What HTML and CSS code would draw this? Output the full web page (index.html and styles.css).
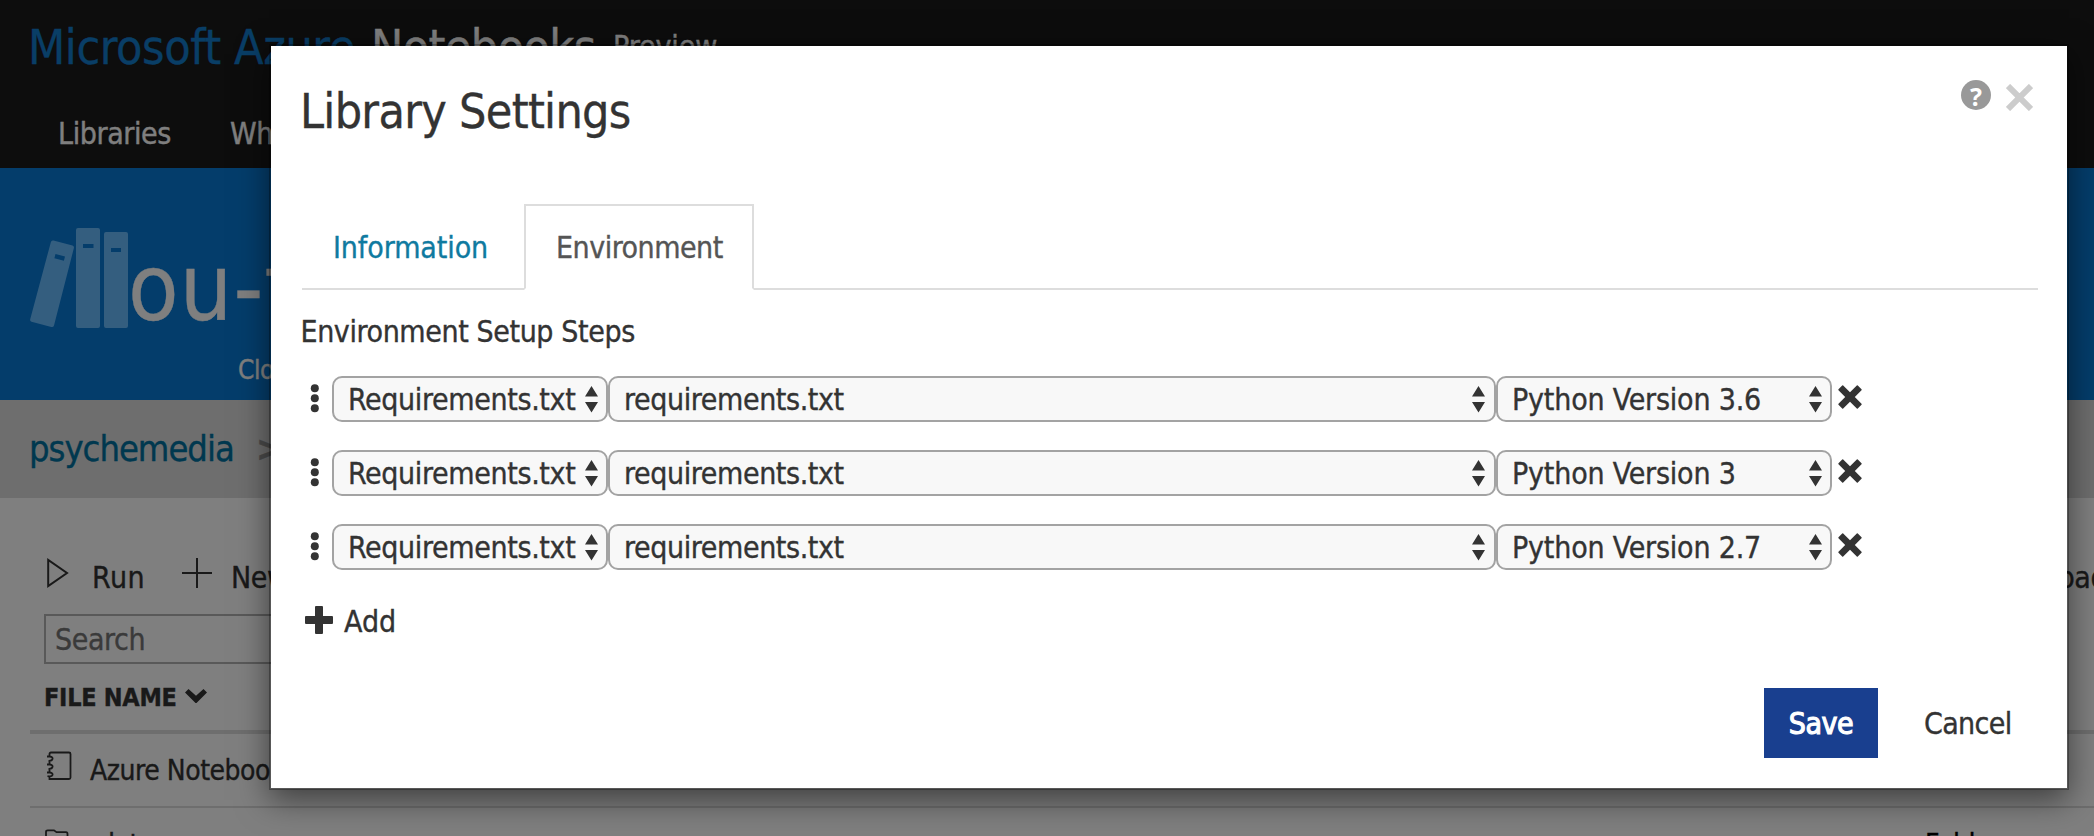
FILE: index.html
```html
<!DOCTYPE html>
<html lang="en">
<head>
<meta charset="utf-8">
<title>Microsoft Azure Notebooks</title>
<link rel="stylesheet" href="styles.css">
</head>
<body>
<svg class="defs" width="0" height="0" aria-hidden="true">
  <symbol id="dots" viewBox="0 0 30 46"><circle cx="12.8" cy="12.3" r="4"/><circle cx="12.8" cy="22.3" r="4"/><circle cx="12.8" cy="32.3" r="4"/></symbol>
  <symbol id="updown" viewBox="0 0 13 27"><path d="M6.5 0 13 10.5H0zM0 16h13L6.5 26.5z"/></symbol>
  <symbol id="remove" viewBox="0 0 24 24"><path d="M5.2.5 12 7.2 18.800.5Q19.300 0 19.800.5L23.500 4.200Q24 4.700 23.500 5.200L16.800 12 23.500 18.800Q24 19.300 23.500 19.800L19.800 23.500Q19.300 24 18.800 23.500L12 16.800 5.200 23.500Q4.700 24 4.200 23.500L.5 19.800Q0 19.300.5 18.800L7.200 12 .5 5.200Q0 4.700.5 4.200L4.200.5Q4.700 0 5.200.5z"/></symbol>
</svg>

<div class="page">
  <header class="topbar">
    <div class="brand"><span class="brand-azure">Microsoft Azure</span><span class="brand-product">Notebooks</span><span class="brand-preview">Preview</span></div>
    <nav class="nav"><a class="nav-link">Libraries</a><a class="nav-link">Wh</a></nav>
  </header>

  <section class="banner">
    <div class="banner-row">
      <svg class="books" viewBox="0 0 98 100" width="98" height="100">
        <path fill-rule="evenodd" d="M23.500 12.500 42.500 17.500Q44.300 18 43.900 20L24 97.500Q23.400 99.500 21.300 99L1.500 93.800Q-.3 93.200.2 91.200L20.900 13.900Q21.500 12 23.500 12.500zM25.500 26 24.400 30.200 33.900 32.700 35 28.500z"/>
        <path fill-rule="evenodd" d="M48 0H68Q70 0 70 2V98Q70 100 68 100H48Q46 100 46 98V2Q46 0 48 0zM53 16V20H63.500V16z"/>
        <path fill-rule="evenodd" d="M76 4H96Q98 4 98 6V98Q98 100 96 100H76Q74 100 74 98V6Q74 4 76 4zM81 20V24H91V20z"/>
      </svg>
      <h1 class="banner-title">ou-t</h1>
    </div>
    <p class="banner-note">Clo</p>
  </section>

  <div class="crumbs"><a class="crumb-user">psychemedia</a><span class="crumb-sep">&gt;</span></div>

  <main class="files">
    <div class="toolbar">
      <svg class="icon-run" width="22" height="30" viewBox="0 0 22 30"><path d="M1.200 2V28L20 15z"/></svg>
      <span class="tool-run">Run</span>
      <svg class="icon-new" width="30" height="30" viewBox="0 0 30 30"><path d="M15 0V30M0 15H30"/></svg>
      <span class="tool-new">New</span>
      <span class="tool-upload">Upload</span>
    </div>
    <div class="search">Search</div>
    <div class="table">
      <div class="table-head">FILE NAME
        <svg class="chevron" width="22" height="14" viewBox="0 0 22 14"><path d="M0 3.500 3.500 0 11 6.700 18.500 0 22 3.500 11 14.500z"/></svg>
      </div>
      <div class="table-row">
        <svg class="file-icon" width="27" height="30" viewBox="0 0 27 30"><path d="M4.500 5V3Q4.500 1.500 6 1.500H24Q25.500 1.500 25.500 3V26.500Q25.500 28 24 28H4.500V25M2 5.500H5Q8 6 7.500 8 7 10 3.500 9.800M4.500 10V12.500M2 13.500H5Q8 14 7.500 16 7 18 3.500 17.800M4.500 18V20.500M2 21.500H5Q8 22 7.500 24 7 26 2.500 25.200"/></svg>
        <span class="file-name">Azure Notebooks</span>
      </div>
      <div class="table-row">
        <svg class="file-icon folder" width="27" height="30" viewBox="0 0 27 30"><path d="M1 29V3Q1 1.300 2.700 1.300H9L11.500 3.200H21Q22.500 3.200 22.500 5V29z"/></svg>
        <span class="file-name data">data</span>
        <span class="file-type">Folder</span>
      </div>
    </div>
  </main>
</div>

<div class="backdrop"></div>

<div class="modal">
  <div class="modal-head">
    <h2 class="modal-title">Library Settings</h2>
    <div class="modal-tools">
      <span class="help">?</span>
      <svg class="close" width="27" height="27" viewBox="0 0 27 27"><path d="M2 2 25 25M25 2 2 25"/></svg>
    </div>
  </div>
  <div class="tabs"><a class="tab">Information</a><a class="tab tab-active">Environment</a></div>
  <h3 class="steps-title">Environment Setup Steps</h3>
  <div class="steps">
    <div class="step">
      <svg class="dots"><use href="#dots"/></svg>
      <div class="select select-kind">Requirements.txt<svg class="arrows"><use href="#updown"/></svg></div>
      <div class="select select-file">requirements.txt<svg class="arrows"><use href="#updown"/></svg></div>
      <div class="select select-version">Python Version 3.6<svg class="arrows"><use href="#updown"/></svg></div>
      <svg class="remove"><use href="#remove"/></svg>
    </div>
    <div class="step">
      <svg class="dots"><use href="#dots"/></svg>
      <div class="select select-kind">Requirements.txt<svg class="arrows"><use href="#updown"/></svg></div>
      <div class="select select-file">requirements.txt<svg class="arrows"><use href="#updown"/></svg></div>
      <div class="select select-version">Python Version 3<svg class="arrows"><use href="#updown"/></svg></div>
      <svg class="remove"><use href="#remove"/></svg>
    </div>
    <div class="step">
      <svg class="dots"><use href="#dots"/></svg>
      <div class="select select-kind">Requirements.txt<svg class="arrows"><use href="#updown"/></svg></div>
      <div class="select select-file">requirements.txt<svg class="arrows"><use href="#updown"/></svg></div>
      <div class="select select-version">Python Version 2.7<svg class="arrows"><use href="#updown"/></svg></div>
      <svg class="remove"><use href="#remove"/></svg>
    </div>
  </div>
  <div class="add">
    <svg width="28" height="28" viewBox="0 0 28 28"><path d="M11 0H17Q18 0 18 1V10H27Q28 10 28 11V17Q28 18 27 18H18V27Q18 28 17 28H11Q10 28 10 27V18H1Q0 18 0 17V11Q0 10 1 10H10V1Q10 0 11 0z"/></svg>
    <span class="add-label">Add</span>
  </div>
  <div class="modal-foot"><a class="save">Save</a><a class="cancel">Cancel</a></div>
</div>
</body>
</html>
```
FILE: styles.css
```css
* { box-sizing: border-box; }
body {
  margin: 0;
  height: 836px;
  overflow: hidden;
  position: relative;
  background: #fff;
  color: #333;
  font: 30px/40px "DejaVu Sans Condensed", "DejaVu Sans", sans-serif;
  letter-spacing: -0.4px;
  white-space: nowrap;
  -webkit-text-stroke: 0.35px currentColor;
}
h1, h2, h3, p { margin: 0; font-weight: normal; }
svg { flex: none; display: block; fill: #333; }
.defs { position: absolute; }

.page { height: 836px; overflow: hidden; }
.topbar { height: 168px; padding: 17px 0 0 28px; background: #1a1a1a; color: #fff; }
.brand { display: flex; font-size: 48px; line-height: 60px; }
.brand-azure { width: 343px; color: #127ccc; letter-spacing: -0.4px; }
.brand-product { width: 242px; letter-spacing: -0.6px; }
.brand-preview { font-size: 30px; letter-spacing: -0.1px; }
.nav { display: flex; padding: 37px 0 0 30px; }
.nav-link { width: 172px; }

.banner { height: 232px; padding: 60px 0 0 30px; background: #087ad6; color: #fff; }
.banner-row { display: flex; height: 126px; }
.books { fill: #68bcff; }
.banner-title { margin-top: 15px; font-size: 92px; line-height: 92px; letter-spacing: 1.2px; }
.banner-note { padding-left: 208px; font-size: 26px; line-height: 32px; }

.crumbs { display: flex; height: 98px; padding-left: 29px; background: #dcdcdc; font-size: 36px; line-height: 98px; }
.crumb-user { width: 227px; color: #00709e; letter-spacing: -1px; }
.crumb-sep { color: #969696; font-weight: bold; }

.toolbar { display: flex; height: 116px; padding: 60px 0 0 47px; }
.toolbar > * { flex: none; }
.icon-run path, .icon-new path { fill: none; stroke: #333; stroke-width: 2; }
.tool-run { margin-left: 23px; width: 65px; letter-spacing: 0.5px; }
.icon-new { margin-left: 25px; }
.tool-new { margin-left: 19px; width: 1784px; }
.search { margin-left: 44px; width: 460px; height: 50px; padding-left: 9px; border: 2px solid #b2b2b2; line-height: 47px; color: #757575; }
.table { margin-left: 30px; }
.table-head { display: flex; height: 70px; padding: 14px 0 0 14px; border-bottom: 4px solid #dcdcdc; font-size: 25px; font-weight: bold; letter-spacing: -0.3px; }
.chevron { margin: 11px 0 0 8px; }
.table-row { display: flex; height: 74px; padding-left: 15px; border-bottom: 2px solid #dcdcdc; font-size: 28px; line-height: 73px; letter-spacing: -0.47px; }
.file-icon { margin-top: 17px; }
.file-icon path { fill: none; stroke: #333; stroke-width: 1.8; }
.folder { margin-top: 21px; }
.file-name { margin-left: 18px; width: 1835px; }
.data { margin-left: 27px; width: 1826px; }
.file-type { color: #000; }

.backdrop { position: absolute; inset: 0; background: rgba(0, 0, 0, .5); }

.modal {
  position: absolute;
  left: 269px;
  top: 44px;
  width: 1800px;
  height: 746px;
  padding: 34px 29px 0 31px;
  border: 2px solid rgba(0, 0, 0, .3);
  background: #fff;
  background-clip: padding-box;
  box-shadow: 0 10px 30px rgba(0, 0, 0, .5);
}
.modal-head { display: flex; justify-content: space-between; height: 124px; padding-right: 5px; }
.modal-title { margin: 1px 0 0 -2px; font-size: 48px; line-height: 60px; letter-spacing: -0.7px; }
.modal-tools { display: flex; gap: 15px; }
.help { width: 30px; height: 30px; border-radius: 50%; background: #999; color: #fff; font: bold 25px/33px "Noto Sans", sans-serif; text-align: center; letter-spacing: 0; -webkit-text-stroke: 0; }
.close { margin-top: 4px; }
.close path { fill: none; stroke: #ccc; stroke-width: 6; }

.tabs { display: flex; height: 86px; border-bottom: 2px solid #ddd; line-height: 83px; }
.tab { width: 222px; height: 86px; padding: 2px 0 0 31px; color: #0f7aa0; letter-spacing: -0.1px; }
.tab-active { width: 230px; padding: 0 0 0 30px; border: 2px solid #ddd; border-bottom-color: #fff; background: #fff; color: #555; letter-spacing: -0.5px; }

.steps-title { margin: 22px 0 0 -1.500px; font-size: 30px; line-height: 40px; letter-spacing: -0.4px; }
.steps { display: grid; gap: 28px; margin-top: 24px; }
.step { display: flex; height: 46px; }
.dots { width: 30px; height: 46px; }
.select { display: flex; justify-content: space-between; height: 46px; padding: 0 8px 0 14px; border: 2px solid #a3a3a3; border-radius: 10px; background: #f8f8f8; line-height: 43px; }
.select-kind { width: 276px; letter-spacing: -0.36px; }
.select-file { width: 888px; padding-right: 9px; }
.select-version { width: 336px; letter-spacing: -0.2px; }
.arrows { width: 13px; height: 27px; margin-top: 8px; }
.remove { width: 24px; height: 24px; margin: 9px 0 0 6px; }
.add { display: flex; align-items: flex-start; margin-top: 32px; padding: 0 0 0 3px; }
.add svg { margin-top: 4px; }
.add-label { margin-left: 11px; letter-spacing: 0; }
.modal-foot { display: flex; justify-content: flex-end; gap: 46px; margin-top: 46px; line-height: 71px; }
.save { width: 114px; height: 70px; background: #193f8f; color: #fff; text-align: center; -webkit-text-stroke: 1.1px #fff; }
.cancel { width: 114px; letter-spacing: -0.65px; }
```
